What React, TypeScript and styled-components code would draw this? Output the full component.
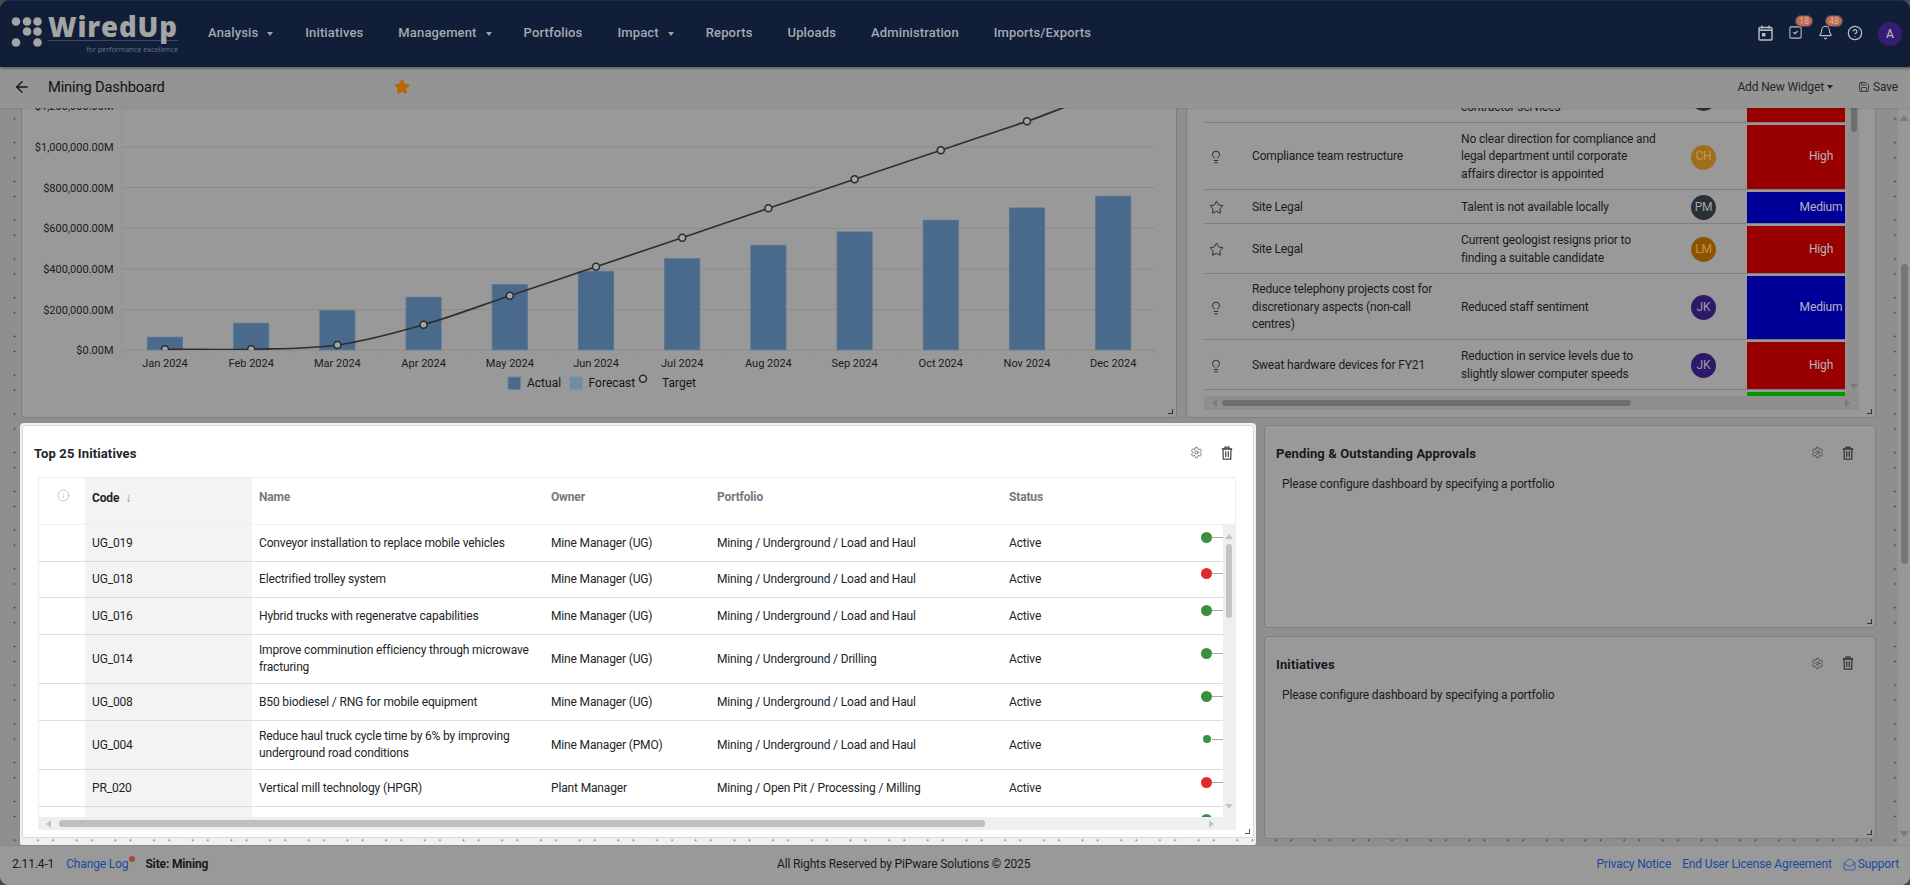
import React from "react";
import styled, { createGlobalStyle, css } from "styled-components";
import { ArrowLeft, Bell, CircleHelp, Info, Lightbulb, MailOpen, Save, Settings, SquareCheck, Star } from "lucide-react";

const Global = createGlobalStyle`
  html, body { margin: 0; padding: 0; background: #4a4a4a; }
  body { font-family: Roboto, "Liberation Sans", sans-serif; font-size: 12px; letter-spacing: -0.15px; overflow: hidden; }
  * { box-sizing: border-box; }
`;

const dots = (color: string) => css`
  background-image:
    radial-gradient(circle, ${color} 0.7px, transparent 1.2px),
    radial-gradient(circle, ${color} 0.7px, transparent 1.2px),
    radial-gradient(circle, ${color} 0.7px, transparent 1.2px),
    radial-gradient(circle, ${color} 0.7px, transparent 1.2px);
  background-size: 38.69px 38.76px;
  background-position: -4.95px 99.62px, 18.65px 99.62px, -4.95px 123.32px, 18.65px 123.32px;
  background-attachment: fixed;
`;

const Shell = styled.div`
  width: 1910px; height: 885px; display: flex; flex-direction: column; overflow: hidden;
  border-radius: 9px; background: #999; position: relative;
`;

/* ---------- header ---------- */
const Header = styled.header`
  height: 67px; flex: none; background: #101e38; border-top: 1px solid #1c2c4c; display: flex;
  box-shadow: 0 1px 3px rgba(0,0,0,.5); position: relative; z-index: 3;
`;
const LogoLink = styled.div`width: 208px; flex: none; padding: 15px 0 0 11px; display: flex; gap: 5px; align-items: flex-start;`;
const LogoText = styled.div`width: 130px; display: flex; flex-direction: column;`;
const LogoWord = styled.div`
  height: 25px; border-bottom: 1px solid #3d4a64; color: #a4a4a4; font: 800 27.5px/22px "Open Sans", sans-serif;
  letter-spacing: .9px; white-space: nowrap;
`;
const LogoTag = styled.div`margin-top: 3px; text-align: right; color: #6b7486; font: 400 7.2px/11px "Open Sans", sans-serif; letter-spacing: 0; white-space: nowrap;`;
const Nav = styled.nav`display: flex; align-items: center; gap: 35px; height: 63px;`;
const NavItem = styled.div`display: flex; align-items: center; color: #a3a9b0; font-size: 13px; font-weight: 500; letter-spacing: .14px; white-space: nowrap;`;
const Triangle = styled.span<{ $dir: "up" | "down" | "left" | "right"; $size: number; $color: string }>`
  display: block; flex: none; width: 0; height: 0;
  ${(p) => p.$dir === "down" && `border-left:${p.$size}px solid transparent;border-right:${p.$size}px solid transparent;border-top:${p.$size + 1}px solid ${p.$color};`}
  ${(p) => p.$dir === "up" && `border-left:${p.$size}px solid transparent;border-right:${p.$size}px solid transparent;border-bottom:${p.$size + 1}px solid ${p.$color};`}
  ${(p) => p.$dir === "left" && `border-top:${p.$size}px solid transparent;border-bottom:${p.$size}px solid transparent;border-right:${p.$size + 1}px solid ${p.$color};`}
  ${(p) => p.$dir === "right" && `border-top:${p.$size}px solid transparent;border-bottom:${p.$size}px solid transparent;border-left:${p.$size + 1}px solid ${p.$color};`}
`;
const NavCaret = styled.span`margin: 2px -3px 0 9px;`;
const HeaderIcons = styled.div`margin-left: auto; display: flex; align-items: center; padding-right: 8px; height: 63px;`;
const IconCell = styled.div`width: 30px; height: 20px; display: flex; align-items: center; justify-content: center; color: #b9bfc6; position: relative;`;
const Badge = styled.span`
  position: absolute; left: 15px; top: -8px; width: 18px; height: 12px; border-radius: 6px; background: #c26a4b;
  border: 1px solid #34457a; color: #d9b3a3; font-size: 9px; letter-spacing: 0; line-height: 10px; text-align: center;
`;
const HeadAvatar = styled.div`
  width: 24px; height: 24px; margin: 2px 0 0 8px; border-radius: 50%; background: #351c75; color: #aaa; font-size: 12px; font-weight: 500;
  display: flex; align-items: center; justify-content: center;
`;

/* ---------- toolbar ---------- */
const Toolbar = styled.div`
  height: 41px; flex: none; background: #949494; display: flex; align-items: center; padding: 0 12px 1px 13px; color: #171717; position: relative; z-index: 2;
  box-shadow: 0 1px 1px rgba(0,0,0,.08);
`;
const PageTitle = styled.div`width: 346px; margin-left: 17px; font-size: 14.7px; color: #111; white-space: nowrap;`;
const ToolActions = styled.div`margin-left: auto; display: flex; align-items: center; color: #262626;`;
const Widget = styled.span`display: flex; align-items: center; gap: 3px; margin-right: 25px;`;
const SaveAction = styled.span`display: flex; align-items: center; gap: 3px;`;

/* ---------- canvas ---------- */
const Main = styled.div`flex: 1; min-height: 0; display: flex;`;
const Canvas = styled.main`flex: 1; min-width: 0; overflow: hidden; background-color: #8f8f8f; ${dots("#3c3c3c")}`;
const PageBar = styled.div`width: 12px; flex: none; background: #979797; padding: 7px 0 8px; display: flex; flex-direction: column; align-items: center;`;
const PageThumb = styled.div`width: 7px; height: 300px; margin-top: 143px; border-radius: 4px; background: #767676;`;
const Bottom = styled.div`margin-top: auto;`;
const TopRow = styled.section`height: 310px; padding-left: 21px; display: flex; gap: 9px;`;
const BottomRow = styled.section`margin-top: 5px; padding-left: 20px; display: flex; height: 422px;`;
const Card = styled.article`
  background: #999; border: 1px solid #7f7f7f; border-radius: 4px; position: relative; flex: none;
`;
const ChartCard = styled(Card)`width: 1156px; height: 310px; border-top: 0; border-radius: 0 0 4px 4px; overflow: hidden;`;
const RiskCard = styled(Card)`width: 690px; height: 310px; border-top: 0; border-radius: 0 0 4px 4px; padding-left: 17px;`;
const Handle = styled.span<{ $color: string }>`
  position: absolute; right: 3px; bottom: 3px; width: 5px; height: 5px;
  border-right: 1px solid ${(p) => p.$color}; border-bottom: 1px solid ${(p) => p.$color};
`;
const Plot = styled.svg`display: block;`;
const AxisLabel = styled.text`font: 400 11px Roboto, sans-serif; letter-spacing: 0; fill: #1b1b1b;`;
const LegendLabel = styled.text`font: 400 12px Roboto, sans-serif; letter-spacing: 0; fill: #161616;`;

/* ---------- risk table ---------- */
const RiskFrame = styled.div`width: 655px; height: 302px; display: flex; flex-wrap: wrap; background: #929292;`;
const RiskBody = styled.div`width: 641px; height: 288px; overflow: hidden; background: #999;`;
const RiskInner = styled.div`margin-top: -35px;`;
const RiskRow = styled.div<{ $h: number }>`
  height: ${(p) => p.$h}px; padding-top: 2px; display: grid; grid-template-columns: 48px 209px 217px 69px 98px; border-bottom: 1px solid #7e7e7e; align-items: center;
  color: #191b1e; line-height: 17.5px;
`;
const RiskIcon = styled.div`padding-left: 5px; color: #1c1c1c; display: flex;`;
const RiskText = styled.div`padding-right: 8px;`;
const Avatar = styled.div<{ $bg: string; $fg: string }>`
  width: 25px; height: 25px; margin-left: 13px; border-radius: 50%; background: ${(p) => p.$bg}; color: ${(p) => p.$fg};
  font-size: 12px; display: flex; align-items: center; justify-content: center;
`;
const Level = styled.div<{ $bg: string }>`
  align-self: stretch; background: ${(p) => p.$bg}; color: #b8b4bc; display: flex; align-items: center; justify-content: center; padding-left: 50px;
`;
const VTrackDark = styled.div`width: 11px; height: 288px; background: #8f8f8f; margin-left: 3px; display: flex; flex-direction: column; align-items: center; padding-bottom: 7px;`;
const ThumbDark = styled.div`width: 6px; height: 24px; background: #6e6e6e; border-radius: 0 0 3px 3px;`;
const HTrackDark = styled.div`width: 655px; height: 14px; background: #8f8f8f; display: flex; align-items: center; padding: 0 9px 0 8px;`;
const HThumbDark = styled.div`width: 409px; height: 6px; margin-left: 5px; background: #6e6e6e; border-radius: 3px;`;

/* ---------- spotlight card ---------- */
const Spotlight = styled.div`
  width: 1236px; flex: none; height: 422px; padding: 2px 2px 7px; border-radius: 4px 4px 2px 2px; background-color: #f0f0f0; ${dots("#777")}
`;
const TopCard = styled.article`
  height: 413px; background: #fff; border: 1px solid #d9d9d9; border-radius: 3px; padding: 0 17px 0 15px; position: relative; display: flex; flex-direction: column;
`;
const CardHead = styled.div`height: 51px; flex: none; display: flex; align-items: center; padding-top: 4px;`;
const CardTitle = styled.h3<{ $dark?: boolean }>`
  margin: 0 0 0 ${(p) => (p.$dark ? "-1px" : "-4px")}; font-size: 13px; font-weight: 700; letter-spacing: .12px; color: ${(p) => (p.$dark ? "#17191c" : "#212529")}; white-space: nowrap;
`;
const CardTools = styled.div<{ $color: string; $shift: number }>`margin-left: auto; display: flex; align-items: center; gap: 18px; color: ${(p) => p.$color}; margin-right: ${(p) => p.$shift}px; margin-top: -2px;`;
const DataTable = styled.div`height: 353px; width: 1198px; border: 1px solid #eee; border-bottom: 0; display: flex; flex-direction: column; flex: none;`;
const GridRow = css`display: grid; grid-template-columns: 46px 167px 292px 166px 292px 1fr;`;
const HeadRow = styled.div`${GridRow} height: 47px; flex: none; border-bottom: 1px solid #f0f0f0;`;
const HeadCell = styled.div<{ $code?: boolean }>`
  padding: 11px 7px 0; font-weight: 700; color: ${(p) => (p.$code ? "#212529" : "#747a80")}; line-height: 16px;
  ${(p) => p.$code && "background:#f3f3f3;padding-top:12px;"}
`;
const InfoCell = styled.div`display: flex; justify-content: center; padding-top: 11px; color: #b0b0b0; padding-left: 3px;`;
const Arrow = styled.span`margin-left: 6px; color: #888; font-weight: 400;`;
const BodyWrap = styled.div`flex: 1; min-height: 0; display: flex;`;
const Rows = styled.div`flex: 1; min-width: 0; overflow: hidden;`;
const Row = styled.div<{ $h: number }>`${GridRow} height: ${(p) => p.$h}px; border-bottom: 1px solid #dcdcdc; color: #212529;`;
const Cell = styled.div`padding: 0 7px; display: flex; align-items: center; line-height: 17px;`;
const CodeCell = styled(Cell)`background: #f3f3f3;`;
const StatusCell = styled.div`display: flex; align-items: center; justify-content: flex-end;`;
const Signal = styled.span<{ $c: string; $s: number }>`
  width: ${(p) => p.$s}px; height: ${(p) => p.$s}px; border-radius: 50%; background: ${(p) => p.$c}; margin: 0 ${(p) => (11 - p.$s) / 2}px 12px 0; flex: none;
`;
const Stem = styled.span`width: 11px; height: 1px; background: #9db0a6; margin-bottom: 12px; flex: none;`;
const VTrack = styled.div`width: 12px; flex: none; background: #efefef; display: flex; flex-direction: column; align-items: center; padding: 9px 0 8px;`;
const Thumb = styled.div`width: 6px; height: 74px; margin-top: 5px; border-radius: 3px; background: #c4c4c4;`;
const HTrack = styled.div`height: 13px; flex: none; background: #efefef; display: flex; align-items: center; padding: 0 21px 0 7px;`;
const HThumb = styled.div`width: 926px; height: 7px; margin-left: 8px; border-radius: 4px; background: #bfbfbf;`;
const Grow = styled.div`margin-left: auto;`;

/* ---------- side cards ---------- */
const SideStack = styled.div`width: 612px; margin: 2px 0 0 8px; flex: none; display: flex; flex-direction: column; gap: 7.5px;`;
const SideCard = styled(Card)`height: 203px; padding: 0 12px; width: 100%;`;
const SideNote = styled.div`margin: -1px 0 0 5px; color: #191b1e; line-height: 17px;`;

/* ---------- footer ---------- */
const Footer = styled.footer`
  height: 40px; flex: none; background: #999; display: grid; grid-template-columns: 765px auto 1fr; align-items: center; padding: 0 11px 3px 12px; color: #1a1a1a;
  border-top: 1px solid #8a8a8a;
`;
const FootLeft = styled.div`display: flex; align-items: center;`;
const FootLink = styled.a`color: #1a4a9e; text-decoration: none; display: inline-flex; align-items: center; gap: 2px; white-space: nowrap;`;
const ChangeLog = styled(FootLink)`margin-left: 12px; position: relative;`;
const LogDot = styled.span`position: absolute; right: -7px; top: -1px; width: 6px; height: 6px; border-radius: 50%; background: #a04f35;`;
const Site = styled.strong`margin-left: 17px; font-weight: 700;`;
const FootRight = styled.div`display: flex; justify-content: flex-end; gap: 11px;`;

const TrashIcon = () => (
  <svg width="12" height="14" viewBox="0 0 12 14" fill="none" stroke="currentColor" strokeWidth="1.25">
    <path d="M.8 3h10.4" strokeWidth="1.6" />
    <path d="M4 3V1.1h4V3" />
    <path d="M2 3.2l.3 10h7.4l.3-10" />
    <path d="M4.7 5.3v5.6M7.3 5.3v5.6" />
  </svg>
);
const CalendarIcon = () => (
  <svg width="15" height="16" viewBox="0 0 15 16" fill="none" stroke="currentColor" strokeWidth="1.4">
    <rect x="1" y="2.5" width="13" height="12.5" rx="1" />
    <path d="M1 5.2h13" strokeWidth="1.6" />
    <path d="M4 .5v3M11 .5v3" />
    <rect x="4" y="8" width="3.4" height="3.4" fill="currentColor" stroke="none" />
  </svg>
);

const navItems: [string, boolean][] = [
  ["Analysis", true], ["Initiatives", false], ["Management", true], ["Portfolios", false], ["Impact", true],
  ["Reports", false], ["Uploads", false], ["Administration", false], ["Imports/Exports", false],
];

const months = ["Jan", "Feb", "Mar", "Apr", "May", "Jun", "Jul", "Aug", "Sep", "Oct", "Nov", "Dec"];
const barTops = [337.3, 323.3, 310.7, 297.3, 284.7, 271.3, 258.7, 245.3, 232, 220.3, 208, 196.3];
const lineY = [349.3, 349.3, 345, 324.7, 295.7, 266.7, 237.7, 208.3, 179.3, 150.3, 121.3, 92.3];
const cx = (i: number) => 165 + 86.2 * i;
const linePath = lineY.reduce((d, y, i) => {
  if (i === 0) return `M${cx(0)} ${y}`;
  const p0 = lineY[Math.max(0, i - 2)], p1 = lineY[i - 1], p2 = y, p3 = lineY[Math.min(11, i + 1)];
  const c1 = p1 + (p2 - p0) / 6, c2 = p2 - (p3 - p1) / 6;
  return `${d} C${cx(i - 1) + 28.7} ${c1} ${cx(i) - 28.7} ${c2} ${cx(i)} ${p2}`;
}, "");
const axis = [
  ["$1,200,000.00M", 106], ["$1,000,000.00M", 147], ["$800,000.00M", 187.5], ["$600,000.00M", 228.3],
  ["$400,000.00M", 269], ["$200,000.00M", 309.5], ["$0.00M", 350],
] as [string, number][];

const Chart = () => (
  <Plot width="1154" height="309" viewBox="22 108 1154 309">
    <defs><clipPath id="plot"><rect x="122" y="100" width="1034" height="250" /></clipPath></defs>
    {axis.map(([t, y]) => (
      <g key={t}>
        <line x1="122" x2="1155" y1={y} y2={y} stroke="#8b8b8b" />
        <AxisLabel x="113.5" y={y + 4} textAnchor="end">{t}</AxisLabel>
      </g>
    ))}
    <line x1="122" x2="122" y1="100" y2="354" stroke="#8f8f8f" />
    {months.map((m, i) => (
      <g key={m}>
        <rect x={cx(i) - 17.5} y={barTops[i]} width="35" height={349.7 - barTops[i]} fill="#4a6a8c" stroke="#557494" />
        <line x1={122 + 86.1 * (i + 1)} x2={122 + 86.1 * (i + 1)} y1="350" y2="354" stroke="#8b8b8b" />
        <AxisLabel x={cx(i)} y="367" textAnchor="middle">{m} 2024</AxisLabel>
      </g>
    ))}
    <g clipPath="url(#plot)">
      <path d={linePath} fill="none" stroke="#2e2e2e" strokeWidth="1.7" />
      {lineY.map((y, i) => <circle key={i} cx={cx(i)} cy={y} r="3.5" fill="#a6a6a6" stroke="#2a2a2a" strokeWidth="1.5" />)}
    </g>
    <rect x="508" y="377" width="12.5" height="12.5" fill="#4a6a8c" stroke="#6a85a0" />
    <LegendLabel x="527" y="387">Actual</LegendLabel>
    <rect x="570" y="377" width="12.5" height="12.5" fill="#6f8ca5" stroke="#7994ab" />
    <LegendLabel x="588.6" y="387">Forecast</LegendLabel>
    <circle cx="643" cy="378.7" r="3.5" fill="#a6a6a6" stroke="#2a2a2a" strokeWidth="1.5" />
    <LegendLabel x="662" y="387">Target</LegendLabel>
  </Plot>
);

type Risk = { h: number; icon: "bulb" | "star" | null; name: React.ReactNode; desc: React.ReactNode; who?: string; bg?: string; fg?: string; level?: string; lv?: string };
const RED = "#990000", BLUE = "#000099", GREEN = "#009900";
const risks: Risk[] = [
  { h: 50, icon: null, name: "", desc: <><br />contractor services</>, who: " ", bg: "#263238", fg: "#a5a5a5", level: "", lv: RED },
  { h: 67, icon: "bulb", name: "Compliance team restructure", desc: <>No clear direction for compliance and<br />legal department until corporate<br />affairs director is appointed</>, who: "CH", bg: "#a06e1c", fg: "#c09a58", level: "High", lv: RED },
  { h: 34, icon: "star", name: "Site Legal", desc: "Talent is not available locally", who: "PM", bg: "#263238", fg: "#a5a5a5", level: "Medium", lv: BLUE },
  { h: 50, icon: "star", name: "Site Legal", desc: <>Current geologist resigns prior to<br />finding a suitable candidate</>, who: "LM", bg: "#8c5400", fg: "#bf9048", level: "High", lv: RED },
  { h: 66, icon: "bulb", name: <>Reduce telephony projects cost for<br />discretionary aspects (non-call<br />centres)</>, desc: "Reduced staff sentiment", who: "JK", bg: "#2c1a68", fg: "#a09ab4", level: "Medium", lv: BLUE },
  { h: 50, icon: "bulb", name: "Sweat hardware devices for FY21", desc: <>Reduction in service levels due to<br />slightly slower computer speeds</>, who: "JK", bg: "#2c1a68", fg: "#a09ab4", level: "High", lv: RED },
  { h: 50, icon: null, name: "", desc: "", level: "", lv: GREEN },
];

const GRN = "#3a8f40", REDD = "#e02a2a";
const initiatives = [
  { h: 37, code: "UG_019", name: "Conveyor installation to replace mobile vehicles", owner: "Mine Manager (UG)", port: "Mining / Underground / Load and Haul", c: GRN, s: 11 },
  { h: 36, code: "UG_018", name: "Electrified trolley system", owner: "Mine Manager (UG)", port: "Mining / Underground / Load and Haul", c: REDD, s: 11 },
  { h: 37, code: "UG_016", name: "Hybrid trucks with regeneratve capabilities", owner: "Mine Manager (UG)", port: "Mining / Underground / Load and Haul", c: GRN, s: 11 },
  { h: 49, code: "UG_014", name: "Improve comminution efficiency through microwave fracturing", owner: "Mine Manager (UG)", port: "Mining / Underground / Drilling", c: GRN, s: 11 },
  { h: 37, code: "UG_008", name: "B50 biodiesel / RNG for mobile equipment", owner: "Mine Manager (UG)", port: "Mining / Underground / Load and Haul", c: GRN, s: 11 },
  { h: 49, code: "UG_004", name: "Reduce haul truck cycle time by 6% by improving underground road conditions", owner: "Mine Manager (PMO)", port: "Mining / Underground / Load and Haul", c: GRN, s: 8 },
  { h: 37, code: "PR_020", name: "Vertical mill technology (HPGR)", owner: "Plant Manager", port: "Mining / Open Pit / Processing / Milling", c: REDD, s: 11 },
  { h: 37, code: "", name: "", owner: "", port: "", c: GRN, s: 11 },
];

export default function App() {
  return (
    <Shell>
      <Global />
      <Header>
        <LogoLink>
          <svg width="32" height="34" viewBox="0 0 32 34" fill="#a4a4a4">
            {[[5, 5.5], [16, 5.5], [26.5, 5.5], [16, 15.5], [26.5, 15.5], [5, 26.5], [26.5, 26.5]].map(([x, y]) => (
              <circle key={`${x}-${y}`} cx={x} cy={y} r="4.3" />
            ))}
          </svg>
          <LogoText>
            <LogoWord>WiredUp</LogoWord>
            <LogoTag>for performance excellence</LogoTag>
          </LogoText>
        </LogoLink>
        <Nav>
          {navItems.map(([label, caret]) => (
            <NavItem key={label}>
              {label}
              {caret && <NavCaret><Triangle $dir="down" $size={3.5} $color="#9aa0a8" /></NavCaret>}
            </NavItem>
          ))}
        </Nav>
        <HeaderIcons>
          <IconCell><CalendarIcon /></IconCell>
          <IconCell><SquareCheck size={15} strokeWidth={1.7} /><Badge>18</Badge></IconCell>
          <IconCell><Bell size={15} strokeWidth={1.7} /><Badge>48</Badge></IconCell>
          <IconCell><CircleHelp size={16} strokeWidth={1.8} /></IconCell>
          <HeadAvatar>A</HeadAvatar>
        </HeaderIcons>
      </Header>
      <Toolbar>
        <ArrowLeft size={18} strokeWidth={1.8} />
        <PageTitle>Mining Dashboard</PageTitle>
        <Star size={16} fill="#b76800" color="#b76800" />
        <ToolActions>
          <Widget>Add New Widget <Triangle $dir="down" $size={3.5} $color="#262626" /></Widget>
          <SaveAction><Save size={12} strokeWidth={1.6} />Save</SaveAction>
        </ToolActions>
      </Toolbar>
      <Main>
        <Canvas>
          <TopRow>
            <ChartCard>
              <Chart />
              <Handle $color="#333" />
            </ChartCard>
            <RiskCard>
              <RiskFrame>
                <RiskBody>
                  <RiskInner>
                    {risks.map((r, i) => (
                      <RiskRow key={i} $h={r.h}>
                        <RiskIcon>
                          {r.icon === "bulb" && <Lightbulb size={14} strokeWidth={1.5} />}
                          {r.icon === "star" && <Star size={15} strokeWidth={1.4} />}
                        </RiskIcon>
                        <RiskText>{r.name}</RiskText>
                        <RiskText>{r.desc}</RiskText>
                        <div>{r.who && <Avatar $bg={r.bg!} $fg={r.fg!}>{r.who}</Avatar>}</div>
                        <Level $bg={r.lv!}>{r.level}</Level>
                      </RiskRow>
                    ))}
                  </RiskInner>
                </RiskBody>
                <VTrackDark>
                  <ThumbDark />
                  <Bottom><Triangle $dir="down" $size={4} $color="#7a7a7a" /></Bottom>
                </VTrackDark>
                <HTrackDark>
                  <Triangle $dir="left" $size={4} $color="#7a7a7a" />
                  <HThumbDark />
                  <Grow><Triangle $dir="right" $size={4} $color="#7a7a7a" /></Grow>
                </HTrackDark>
              </RiskFrame>
              <Handle $color="#333" />
            </RiskCard>
          </TopRow>
          <BottomRow>
            <Spotlight>
              <TopCard>
                <CardHead>
                  <CardTitle>Top 25 Initiatives</CardTitle>
                  <CardTools $color="#444" $shift={3}>
                    <Settings size={13} strokeWidth={1.3} />
                    <TrashIcon />
                  </CardTools>
                </CardHead>
                <DataTable>
                  <HeadRow>
                    <InfoCell><Info size={13} strokeWidth={1.3} /></InfoCell>
                    <HeadCell $code>Code<Arrow>↓</Arrow></HeadCell>
                    <HeadCell>Name</HeadCell>
                    <HeadCell>Owner</HeadCell>
                    <HeadCell>Portfolio</HeadCell>
                    <HeadCell>Status</HeadCell>
                  </HeadRow>
                  <BodyWrap>
                    <Rows>
                      {initiatives.map((r, i) => (
                        <Row key={i} $h={r.h}>
                          <span />
                          <CodeCell>{r.code}</CodeCell>
                          <Cell>{r.name}</Cell>
                          <Cell>{r.owner}</Cell>
                          <Cell>{r.port}</Cell>
                          <StatusCell>
                            <Cell>{r.code && "Active"}</Cell>
                            <Grow />
                            <Signal $c={r.c} $s={r.s} />
                            <Stem />
                          </StatusCell>
                        </Row>
                      ))}
                    </Rows>
                    <VTrack>
                      <Triangle $dir="up" $size={4} $color="#c4c4c4" />
                      <Thumb />
                      <Bottom><Triangle $dir="down" $size={4} $color="#c4c4c4" /></Bottom>
                    </VTrack>
                  </BodyWrap>
                  <HTrack>
                    <Triangle $dir="left" $size={4} $color="#c4c4c4" />
                    <HThumb />
                    <Grow><Triangle $dir="right" $size={4} $color="#c4c4c4" /></Grow>
                  </HTrack>
                </DataTable>
                <Handle $color="#555" />
              </TopCard>
            </Spotlight>
            <SideStack>
              {["Pending & Outstanding Approvals", "Initiatives"].map((t) => (
                <SideCard key={t}>
                  <CardHead>
                    <CardTitle $dark>{t}</CardTitle>
                    <CardTools $color="#333" $shift={9}>
                      <Settings size={13} strokeWidth={1.3} />
                      <TrashIcon />
                    </CardTools>
                  </CardHead>
                  <SideNote>Please configure dashboard by specifying a portfolio</SideNote>
                  <Handle $color="#333" />
                </SideCard>
              ))}
            </SideStack>
          </BottomRow>
        </Canvas>
        <PageBar>
          <Triangle $dir="up" $size={5} $color="#7c7c7c" />
          <PageThumb />
          <Bottom><Triangle $dir="down" $size={5} $color="#7c7c7c" /></Bottom>
        </PageBar>
      </Main>
      <Footer>
        <FootLeft>
          2.11.4-1
          <ChangeLog>Change Log<LogDot /></ChangeLog>
          <Site>Site: Mining</Site>
        </FootLeft>
        <div>All Rights Reserved by PiPware Solutions © 2025</div>
        <FootRight>
          <FootLink>Privacy Notice</FootLink>
          <FootLink>End User License Agreement</FootLink>
          <FootLink><MailOpen size={13} strokeWidth={1.4} />Support</FootLink>
        </FootRight>
      </Footer>
    </Shell>
  );
}
